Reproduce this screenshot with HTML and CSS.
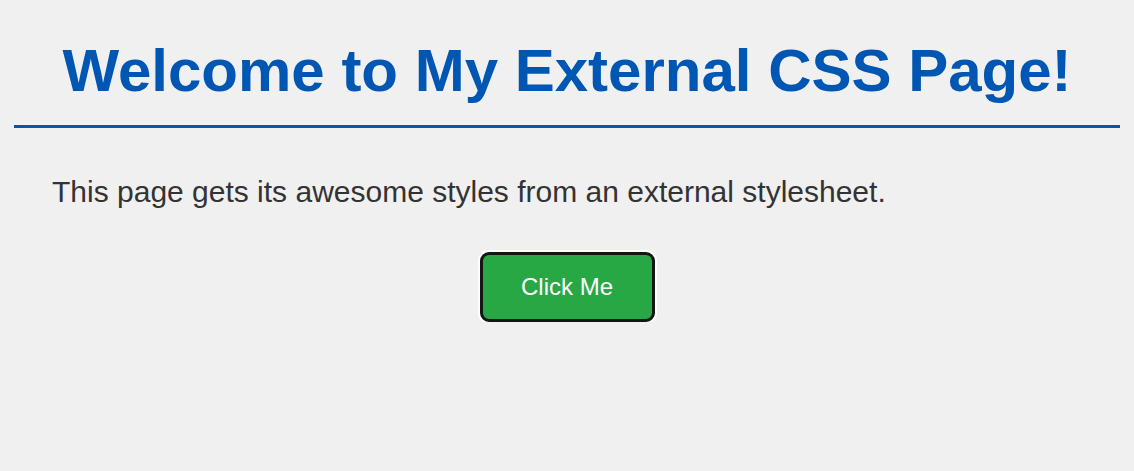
FILE: index.html
```html
<!DOCTYPE html>
<html lang="en">
<head>
<meta charset="utf-8">
<title>External CSS Page</title>
<link rel="stylesheet" href="styles.css">
</head>
<body>
<h1 class="title">Welcome to My External CSS Page!</h1>
<p class="intro">This page gets its awesome styles from an external stylesheet.</p>
<div class="actions">
  <button class="btn" type="button">Click Me</button>
</div>
</body>
</html>
```

FILE: styles.css
```css
html, body {
  margin: 0;
  padding: 0;
}
body {
  background: #f0f0f0;
  font-family: "Liberation Sans", Arial, sans-serif;
  padding: 0 14px;
}
.title {
  margin: 36px 0 0;
  padding-bottom: 20px;
  border-bottom: 3px solid #0056b3;
  color: #0056b3;
  font-size: 60px;
  font-weight: bold;
  text-align: center;
  line-height: normal;
}
.intro {
  margin: 47px 0 0 38px;
  color: #333;
  font-size: 30px;
  line-height: normal;
}
.actions {
  display: flex;
  justify-content: center;
  margin-top: 43px;
}
.btn {
  box-sizing: border-box;
  width: 175px;
  height: 70px;
  background: #28a745;
  color: #fff;
  border: 3px solid #151515;
  border-radius: 9px;
  box-shadow: 0 0 0 2px #fff;
  font-family: "Liberation Sans", Arial, sans-serif;
  font-size: 24px;
  padding: 0;
  cursor: pointer;
}
```
